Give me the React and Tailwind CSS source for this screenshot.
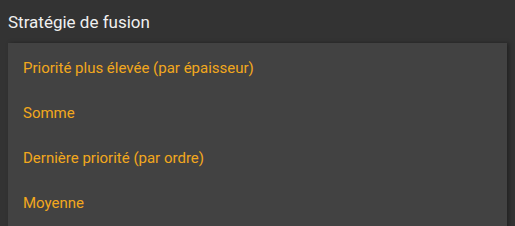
import React from "react";

const options = [
  "Priorité plus élevée (par épaisseur)",
  "Somme",
  "Dernière priorité (par ordre)",
  "Moyenne",
];

const App = () => {
  return (
    <div
      className="w-[515px] h-[226px] overflow-hidden bg-[#333333] flex flex-col"
      style={{ fontFamily: "Roboto, 'Noto Sans', sans-serif" }}
    >
      <div className="h-[43px] shrink-0 flex items-center px-2 pt-[2px]">
        <h3 className="text-[17px] text-[#f0f0f0] font-normal">
          Stratégie de fusion
        </h3>
      </div>
      <div className="ml-2 w-[499px] flex-1 bg-[#424242] shadow-[2px_0_4px_rgba(0,0,0,0.35)] pt-[3px]">
        {options.map((opt) => (
          <div
            key={opt}
            className="h-[45px] flex items-center px-[15px] text-[15px] text-[#f2a81d]"
          >
            {opt}
          </div>
        ))}
        <div className="pl-[40px] pt-[1px] text-[14px] text-[#4f4f4f]">
          Position par défaut
        </div>
      </div>
    </div>
  );
};

export default App;
